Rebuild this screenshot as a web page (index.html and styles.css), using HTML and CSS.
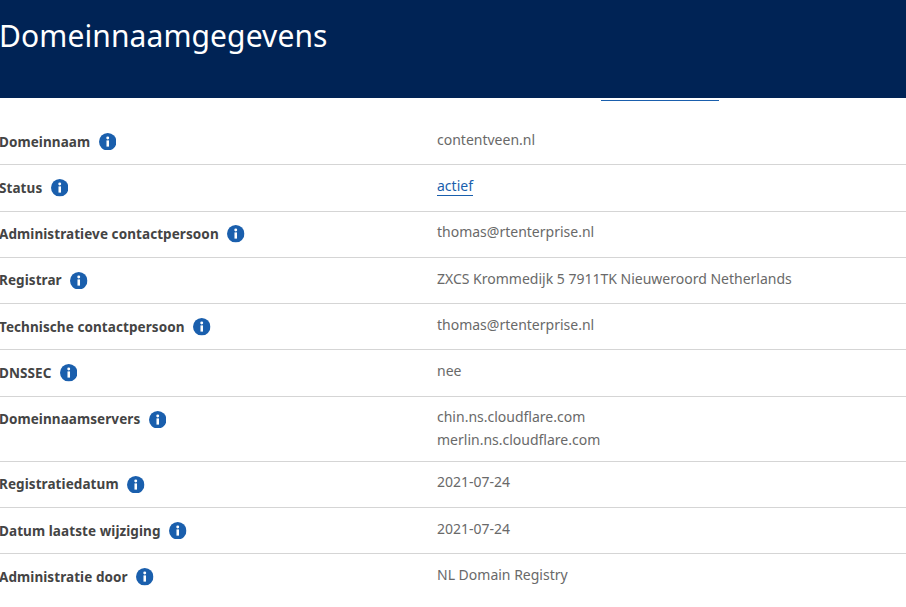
FILE: index.html
```html
<!DOCTYPE html>
<html lang="nl">
<head>
<meta charset="utf-8">
<title>Domeinnaamgegevens</title>
<link rel="stylesheet" href="styles.css">
</head>
<body>
<svg class="sprite" width="0" height="0" aria-hidden="true">
  <symbol id="info" viewBox="0 0 18 18">
    <circle cx="9" cy="9" r="9" fill="#1a5fad"/>
    <rect x="7.7" y="7.6" width="2.6" height="6.4" fill="#fff"/>
    <circle cx="9" cy="5.2" r="1.5" fill="#fff"/>
  </symbol>
</svg>
<header class="banner"><h1 class="title">Domeinnaamgegevens</h1></header>
<div class="tab-line"></div>
<dl class="details">
  <div class="row"><dt class="label">Domeinnaam <svg class="info"><use href="#info"/></svg></dt><dd class="value"><div class="line">contentveen.nl</div></dd></div>
  <div class="row"><dt class="label">Status <svg class="info"><use href="#info"/></svg></dt><dd class="value"><div class="line"><a class="link" href="#">actief</a></div></dd></div>
  <div class="row"><dt class="label">Administratieve contactpersoon <svg class="info"><use href="#info"/></svg></dt><dd class="value"><div class="line">thomas@rtenterprise.nl</div></dd></div>
  <div class="row"><dt class="label">Registrar <svg class="info"><use href="#info"/></svg></dt><dd class="value"><div class="line">ZXCS Krommedijk 5 7911TK Nieuweroord Netherlands</div></dd></div>
  <div class="row"><dt class="label">Technische contactpersoon <svg class="info"><use href="#info"/></svg></dt><dd class="value"><div class="line">thomas@rtenterprise.nl</div></dd></div>
  <div class="row"><dt class="label">DNSSEC <svg class="info"><use href="#info"/></svg></dt><dd class="value"><div class="line">nee</div></dd></div>
  <div class="row"><dt class="label">Domeinnaamservers <svg class="info"><use href="#info"/></svg></dt><dd class="value"><div class="line">chin.ns.cloudflare.com</div><div class="line">merlin.ns.cloudflare.com</div></dd></div>
  <div class="row"><dt class="label">Registratiedatum <svg class="info"><use href="#info"/></svg></dt><dd class="value"><div class="line">2021-07-24</div></dd></div>
  <div class="row"><dt class="label">Datum laatste wijziging <svg class="info"><use href="#info"/></svg></dt><dd class="value"><div class="line">2021-07-24</div></dd></div>
  <div class="row"><dt class="label">Administratie door <svg class="info"><use href="#info"/></svg></dt><dd class="value"><div class="line">NL Domain Registry</div></dd></div>
</dl>
</body>
</html>
```
FILE: styles.css
```css
html, body { margin: 0; padding: 0; background: #fff; overflow: hidden; }
body { font-family: "Noto Sans", sans-serif; font-size: 14px; color: #696969; height: 607px; }
.sprite { position: absolute; }
.banner { background: #002355; height: 98px; }
.title { margin: 0 0 0 -1px; padding-top: 16px; font-size: 30px; line-height: 40px; font-weight: 400; letter-spacing: 0.1px; color: #fff; }
.tab-line { width: 118px; height: 1px; margin: 2px 0 0 601px; background: #1a5fad; }
.details { margin: 17.95px 0 0; }
.row { display: flex; border-bottom: 1px solid #d5d5d5; }
.row:last-child { border-bottom: 0; }
.label { width: 437px; height: 45.3px; margin: 0 0 0 -1px; flex: none; font-size: 13.5px; letter-spacing: 0.08px; font-weight: 700; color: #444; display: flex; align-items: center; gap: 8.5px; }
.info { width: 17.5px; height: 17.5px; }
.value { margin: 0 0 0 1px; padding: 10.7px 0 11.4px; }
.line { line-height: 19px; }
.line + .line { margin-top: 4px; }
.link { color: #1a5fad; text-decoration: none; border-bottom: 1px solid #1a5fad; }
```
